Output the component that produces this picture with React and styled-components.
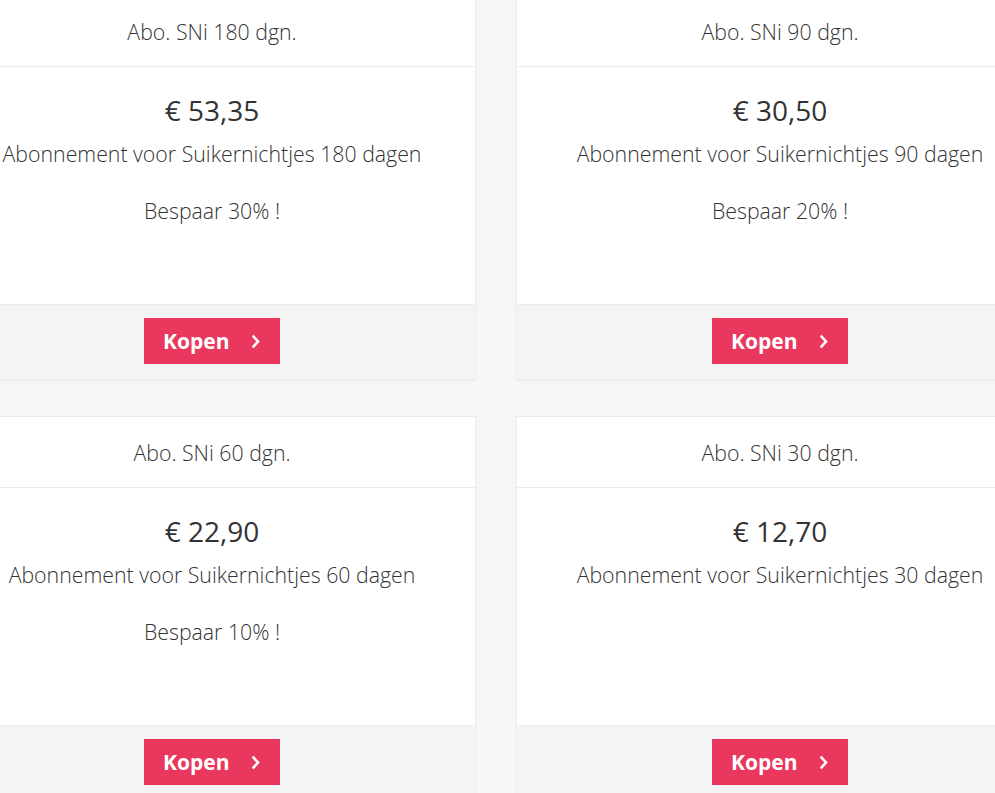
import React from "react";
import styled, { createGlobalStyle } from "styled-components";

const Global = createGlobalStyle`
  html, body { margin: 0; padding: 0; }
  body {
    background: #f6f6f6;
    font-family: "Open Sans", "Liberation Sans", sans-serif;
    overflow: hidden;
    width: 995px;
    height: 793px;
  }
`;

const Grid = styled.div`
  display: grid;
  grid-template-columns: 528px 528px;
  column-gap: 40px;
  row-gap: 36px;
  margin-left: -52px;
  margin-top: -5px;
`;

const Card = styled.div`
  background: #fff;
  border: 1px solid #ececec;
  display: flex;
  flex-direction: column;
  box-shadow: 0 1px 1px rgba(0, 0, 0, 0.03);
`;

const Header = styled.div`
  height: 70px;
  border-bottom: 1px solid #ececec;
  display: flex;
  align-items: center;
  justify-content: center;
  font-size: 21.3px;
  font-weight: 300;
  color: #333;
`;

const Body = styled.div`
  height: 237px;
  padding-top: 24px;
  box-sizing: border-box;
  text-align: center;
  color: #333;
`;

const Price = styled.div`
  font-size: 28px;
  line-height: 38px;
  font-weight: 400;
  color: #333;
`;

const Line = styled.p`
  margin: ${(p) => p.$top}px 0 0;
  font-size: 21.3px;
  line-height: 30px;
  font-weight: 300;
  white-space: nowrap;
`;

const Footer = styled.div`
  background: #f4f4f4;
  border-top: 1px solid #ececec;
  height: 75px;
  box-sizing: border-box;
  padding-top: 13px;
  display: flex;
  justify-content: center;
`;

const Button = styled.button`
  width: 136px;
  height: 46px;
  border: none;
  background: #e9375d;
  color: #fff;
  font-family: "Open Sans", "Liberation Sans", sans-serif;
  font-weight: 700;
  font-size: 21px;
  display: flex;
  align-items: center;
  padding: 0 0 0 19px;
  gap: 23px;
  cursor: pointer;
`;

const Chevron = () => (
  <svg width="8" height="13" viewBox="0 0 8 13">
    <polyline
      points="1.5,1.5 6,6.5 1.5,11.5"
      fill="none"
      stroke="#fff"
      strokeWidth="2.6"
      strokeLinecap="square"
    />
  </svg>
);

const items = [
  { title: "Abo. SNi 180 dgn.", price: "€ 53,35", desc: "Abonnement voor Suikernichtjes 180 dagen", save: "Bespaar 30% !" },
  { title: "Abo. SNi 90 dgn.", price: "€ 30,50", desc: "Abonnement voor Suikernichtjes 90 dagen", save: "Bespaar 20% !" },
  { title: "Abo. SNi 60 dgn.", price: "€ 22,90", desc: "Abonnement voor Suikernichtjes 60 dagen", save: "Bespaar 10% !" },
  { title: "Abo. SNi 30 dgn.", price: "€ 12,70", desc: "Abonnement voor Suikernichtjes 30 dagen", save: null },
];

export default function App() {
  return (
    <>
      <Global />
      <Grid>
        {items.map((it) => (
          <Card key={it.title}>
            <Header>{it.title}</Header>
            <Body>
              <Price>{it.price}</Price>
              <Line $top={10}>{it.desc}</Line>
              {it.save && <Line $top={27}>{it.save}</Line>}
            </Body>
            <Footer>
              <Button>
                Kopen
                <Chevron />
              </Button>
            </Footer>
          </Card>
        ))}
      </Grid>
    </>
  );
}
